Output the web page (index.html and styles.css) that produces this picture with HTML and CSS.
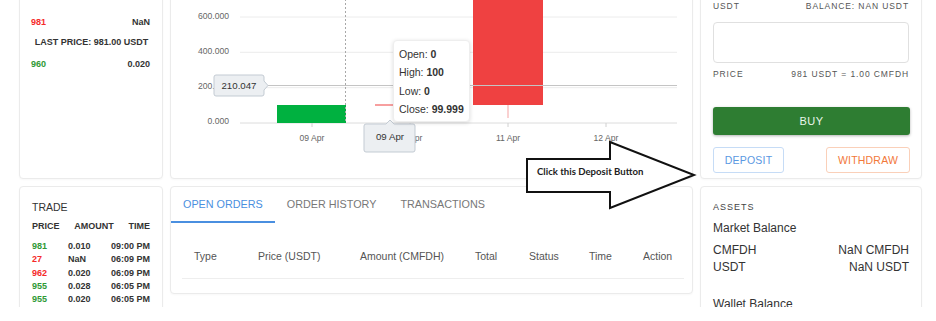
FILE: index.html
```html
<!DOCTYPE html>
<html>
<head>
  <title>CMFDH / USDT</title>
  <meta name="viewport" content="width=device-width, initial-scale=1.0">
  <link rel="stylesheet" href="styles.css">
</head>
<body>
  <div class="viewport">
    <div class="board">
      <section class="card book">
        <div class="book-row"><span class="ask">981</span><span>NaN</span></div>
        <div class="last-price">LAST PRICE: 981.00 USDT</div>
        <div class="book-row"><span class="bid">960</span><span>0.020</span></div>
      </section>

      <section class="card chart">
        <svg class="candles" width="521" height="187" viewBox="171 -9 521 187">
          <defs>
            <clipPath id="y-axis-clip"><rect x="171" y="-9" width="43" height="187"/></clipPath>
            <clipPath id="x-axis-clip"><rect x="415" y="-9" width="40" height="187"/></clipPath>
          </defs>
          <!-- grid -->
          <line class="grid" x1="240" y1="17" x2="677" y2="17"/>
          <line class="grid" x1="240" y1="52.3" x2="677" y2="52.3"/>
          <line class="grid" x1="240" y1="87.7" x2="677" y2="87.7"/>
          <line class="grid base" x1="240" y1="123" x2="677" y2="123"/>
          <text class="axis" x="229" y="19" text-anchor="end">600.000</text>
          <text class="axis" x="229" y="54" text-anchor="end">400.000</text>
          <text class="axis" x="229" y="89" text-anchor="end" clip-path="url(#y-axis-clip)">200.000</text>
          <text class="axis" x="229" y="124" text-anchor="end">0.000</text>
          <!-- ticks -->
          <line class="tick" x1="312" y1="123" x2="312" y2="127"/>
          <line class="tick" x1="410" y1="123" x2="410" y2="127"/>
          <line class="tick" x1="508" y1="123" x2="508" y2="127"/>
          <line class="tick" x1="606" y1="123" x2="606" y2="127"/>
          <text class="axis" x="312" y="141" text-anchor="middle">09 Apr</text>
          <text class="axis" x="410" y="141" text-anchor="middle" clip-path="url(#x-axis-clip)">10 Apr</text>
          <text class="axis" x="508" y="141" text-anchor="middle">11 Apr</text>
          <text class="axis" x="606" y="141" text-anchor="middle">12 Apr</text>
          <!-- candles -->
          <rect class="up" x="277" y="105" width="69" height="18"/>
          <rect class="down" x="375" y="104.5" width="69" height="1"/>
          <line class="wick" x1="508" y1="105" x2="508" y2="118"/>
          <rect class="down" x="473" y="-20" width="70" height="125"/>
          <!-- crosshair -->
          <line class="cross" x1="264" y1="85.5" x2="677" y2="85.5"/>
          <line class="cross dashed" x1="345.5" y1="-9" x2="345.5" y2="123"/>
          <path class="cross-label" d="M216 75H262a2 2 0 0 1 2 2V81L268 85.5L264 90V94a2 2 0 0 1-2 2H216a2 2 0 0 1-2-2V77a2 2 0 0 1 2-2Z"/>
          <text class="cross-text" x="239" y="89" text-anchor="middle">210.047</text>
          <path class="cross-label" d="M366 124H386L390 120L394 124H413a2 2 0 0 1 2 2V150a2 2 0 0 1-2 2H366a2 2 0 0 1-2-2V126a2 2 0 0 1 2-2Z"/>
          <text class="cross-text" x="390" y="140" text-anchor="middle">09 Apr</text>
        </svg>
        <div class="tooltip">
          <div>Open: <b>0</b></div>
          <div>High: <b>100</b></div>
          <div>Low: <b>0</b></div>
          <div>Close: <b>99.999</b></div>
        </div>
      </section>

      <section class="card trade-form">
        <div class="form-label"><span>USDT</span><span>BALANCE: NAN USDT</span></div>
        <div class="amount-input"></div>
        <div class="form-label price"><span>PRICE</span><span>981 USDT = 1.00 CMFDH</span></div>
        <button class="btn-buy">BUY</button>
        <div class="wallet-actions">
          <button class="btn-outline deposit">DEPOSIT</button>
          <button class="btn-outline withdraw">WITHDRAW</button>
        </div>
      </section>

      <section class="card trades">
        <h3>TRADE</h3>
        <div class="trades-head"><span>PRICE</span><span>AMOUNT</span><span>TIME</span></div>
        <div class="trade-row"><span class="bid">981</span><span>0.010</span><span>09:00 PM</span></div>
        <div class="trade-row"><span class="ask">27</span><span>NaN</span><span>06:09 PM</span></div>
        <div class="trade-row"><span class="ask">962</span><span>0.020</span><span>06:09 PM</span></div>
        <div class="trade-row"><span class="bid">955</span><span>0.028</span><span>06:05 PM</span></div>
        <div class="trade-row"><span class="bid">955</span><span>0.020</span><span>06:05 PM</span></div>
      </section>

      <section class="card orders">
        <nav class="tabs">
          <a class="tab active">OPEN ORDERS</a>
          <a class="tab">ORDER HISTORY</a>
          <a class="tab">TRANSACTIONS</a>
        </nav>
        <div class="orders-head">
          <span>Type</span>
          <span>Price (USDT)</span>
          <span>Amount (CMFDH)</span>
          <span>Total</span>
          <span>Status</span>
          <span>Time</span>
          <span>Action</span>
        </div>
      </section>

      <section class="card assets">
        <h4>ASSETS</h4>
        <div class="assets-title">Market Balance</div>
        <div class="asset-row first"><span>CMFDH</span><span>NaN CMFDH</span></div>
        <div class="asset-row"><span>USDT</span><span>NaN USDT</span></div>
        <div class="assets-title wallet">Wallet Balance</div>
      </section>
    </div>

    <svg class="callout" width="180" height="76" viewBox="520 137 180 76">
      <polygon points="527,159 610,159 610,142 694,175 610,208 610,192 527,192"/>
      <text x="537" y="175">Click this Deposit Button</text>
    </svg>
  </div>
</body>
</html>
```

FILE: styles.css
```css
body {
  margin: 0;
  padding: 0;
  background: #fff;
  font-family: "Liberation Sans", Arial, sans-serif;
  color: #333;
}
.viewport {
  position: relative;
  height: 307px;
  overflow: hidden;
}
.board {
  display: grid;
  grid-template-columns: 144px 523px 222px;
  grid-template-rows: 189px 140px;
  gap: 7px;
  margin-top: -10px;
  padding-left: 19px;
}
.card {
  background: #fff;
  border: 1px solid #ebebeb;
  border-radius: 4px;
  box-sizing: border-box;
  box-shadow: 0 1px 2px rgba(0, 0, 0, .03);
}
.ask { color: #f52a2a; }
.bid { color: #2f9a35; }

/* order book */
.book {
  padding: 25px 12px 0 11px;
  font-size: 9px;
  font-weight: bold;
  color: #333;
}
.book-row {
  display: flex;
  justify-content: space-between;
  line-height: 12px;
}
.last-price {
  margin: 8px 0 10px;
  line-height: 12px;
  text-align: center;
  padding-left: 2px;
}

/* chart */
.chart {
  position: relative;
  overflow: hidden;
}
.candles {
  display: block;
  font-family: "Liberation Sans", Arial, sans-serif;
}
.grid { stroke: #ececec; stroke-width: 1; }
.grid.base { stroke: #dcdcdc; }
.tick { stroke: #d0d0d0; }
.axis { font-size: 8.6px; fill: #666; }
.up { fill: #00b140; }
.down { fill: #ef4141; }
.wick { stroke: #f5a3a3; }
.cross { stroke: #c4c4c4; }
.cross.dashed { stroke: #a8a8a8; stroke-dasharray: 2 2; }
.cross-label { fill: #eceff2; stroke: #c3cbd3; }
.cross-text { font-size: 9.7px; fill: #333; }
.tooltip {
  position: absolute;
  left: 222px;
  top: 49px;
  width: 77px;
  height: 82px;
  box-sizing: border-box;
  padding: 4px 0 0 5px;
  background: #fff;
  border: 1px solid #eee;
  border-radius: 4px;
  box-shadow: 0 1px 4px rgba(0, 0, 0, .14);
  font-size: 10.5px;
  line-height: 18.3px;
  color: #333;
  white-space: nowrap;
}

/* buy form */
.trade-form {
  padding: 9px 12px 0 12px;
}
.form-label {
  display: flex;
  justify-content: space-between;
  font-size: 8.5px;
  line-height: 12px;
  letter-spacing: .9px;
  color: #555;
}
.form-label.price { margin-top: 5px; }
.amount-input {
  height: 41px;
  margin-top: 10px;
  border: 1px solid #e0e0e0;
  border-radius: 4px;
  box-sizing: border-box;
}
.btn-buy {
  display: block;
  width: 197px;
  height: 28px;
  margin-top: 27px;
  border: 0;
  border-radius: 3px;
  background: #2e7d32;
  color: #eaf5ea;
  font-family: inherit;
  font-size: 11px;
  letter-spacing: .5px;
  box-shadow: 0 1px 3px rgba(0, 0, 0, .3);
}
.wallet-actions {
  display: flex;
  justify-content: space-between;
  margin-top: 12px;
  width: 197px;
}
.btn-outline {
  height: 26px;
  padding: 0;
  background: #fff;
  border-radius: 3px;
  font-family: inherit;
  font-size: 10.5px;
  letter-spacing: .2px;
}
.deposit {
  width: 71px;
  border: 1px solid #c6dcf6;
  color: #5a98e2;
}
.withdraw {
  width: 84px;
  border: 1px solid #fad0b9;
  color: #f2783a;
}

/* trades */
.trades {
  padding: 13px 12px 0 12px;
}
.trades h3 {
  margin: 0;
  font-size: 10.5px;
  font-weight: normal;
  line-height: 14px;
  color: #333;
}
.trades-head {
  display: flex;
  justify-content: space-between;
  margin: 6px 0 8px;
  font-size: 9px;
  font-weight: bold;
  line-height: 12px;
}
.trade-row {
  display: grid;
  grid-template-columns: 36px 1fr auto;
  font-size: 9px;
  font-weight: bold;
  line-height: 13.3px;
}

/* orders */
.orders {
  align-self: start;
  height: 108px;
}
.tabs {
  display: flex;
}
.tab {
  padding: 0 12px;
  height: 34px;
  line-height: 35px;
  font-size: 10.8px;
  color: #777;
  border-bottom: 2px solid transparent;
}
.tab.active {
  color: #4a8fe0;
  border-bottom-color: #4a8fe0;
}
.orders-head {
  display: grid;
  grid-template-columns: 64px 102px 115px 54px 60px 54px 54px;
  margin: 14px 8px 0 11px;
  padding: 13px 0 15px;
  border-bottom: 1px solid #eee;
  font-size: 10.5px;
  line-height: 13px;
  color: #555;
}
.orders-head span {
  padding-left: 12px;
  white-space: nowrap;
}

/* assets */
.assets {
  padding: 14px 12px 0 12px;
}
.assets h4 {
  margin: 0;
  font-size: 9px;
  font-weight: normal;
  line-height: 12px;
  letter-spacing: 1px;
  color: #444;
}
.assets-title {
  margin-top: 8px;
  font-size: 12px;
  line-height: 15px;
}
.assets-title.wallet { margin-top: 22px; }
.asset-row {
  display: flex;
  justify-content: space-between;
  margin-top: 2px;
  font-size: 12px;
  line-height: 15px;
}
.asset-row.first { margin-top: 7px; }

/* annotation arrow */
.callout {
  position: absolute;
  left: 520px;
  top: 137px;
}
.callout polygon {
  fill: #fff;
  stroke: #111;
  stroke-width: 2;
  stroke-linejoin: miter;
}
.callout text {
  font-family: Lato, "Open Sans", sans-serif;
  font-weight: bold;
  font-size: 9.6px;
  fill: #222;
}
```
